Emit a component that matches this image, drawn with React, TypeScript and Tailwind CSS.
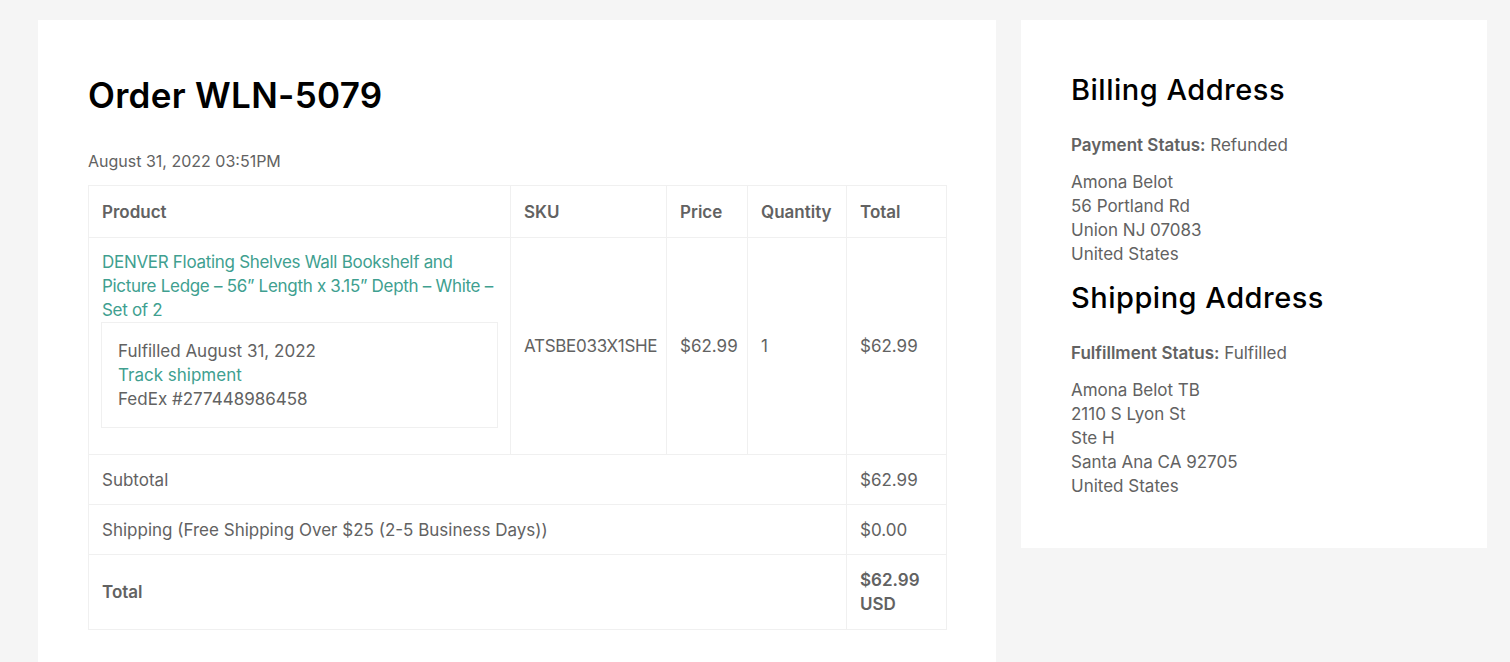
const order = {
  number: "WLN-5079",
  date: "August 31, 2022 03:51PM",
  item: {
    name: "DENVER Floating Shelves Wall Bookshelf and Picture Ledge – 56” Length x 3.15” Depth – White – Set of 2",
    sku: "ATSBE033X1SHE",
    price: "$62.99",
    qty: 1,
    total: "$62.99",
  },
};

const font = { fontFamily: "Inter, 'Noto Sans', sans-serif" };

const AddressLines = ({ lines }: { lines: string[] }) => (
  <div className="mt-[13px]">
    {lines.map((l) => (
      <p key={l}>{l}</p>
    ))}
  </div>
);

export default function App() {
  const cell = "border border-[#f0f0f0] px-[13px] align-middle";

  return (
    <main
      style={font}
      className="bg-[#f5f5f5] min-h-screen pt-5 px-[38px] flex items-start gap-[25px] text-[17px] leading-6 text-[#626262]"
    >
      <section className="bg-white w-[958px] shrink-0 px-[50px] pt-[50px] pb-[50px]">
        <h1 className="text-[35px] leading-[50px] font-semibold text-black tracking-[0.3px]">
          Order {order.number}
        </h1>
        <p className="mt-[29px] text-[16px]">{order.date}</p>
        <table className="mt-3 w-full table-fixed border-collapse">
          <colgroup>
            <col className="w-[422px]" />
            <col className="w-[156px]" />
            <col className="w-[81px]" />
            <col className="w-[99px]" />
            <col className="w-[100px]" />
          </colgroup>
          <thead>
            <tr className="h-[52px] text-left">
              <th className={cell + " font-semibold"}>Product</th>
              <th className={cell + " font-semibold"}>SKU</th>
              <th className={cell + " font-semibold"}>Price</th>
              <th className={cell + " font-semibold"}>Quantity</th>
              <th className={cell + " font-semibold"}>Total</th>
            </tr>
          </thead>
          <tbody>
            <tr>
              <td className="border border-[#f0f0f0] px-3 pt-3 pb-[26px] align-top">
                <a href="#" className="block px-[1px] tracking-[-0.3px] text-[#409f90]">
                  {order.item.name}
                </a>
                <div className="border border-[#f0f0f0] px-[16px] py-[16px]">
                  <p>Fulfilled August 31, 2022</p>
                  <a href="#" className="block text-[#409f90]">
                    Track shipment
                  </a>
                  <p>FedEx #277448986458</p>
                </div>
              </td>
              <td className={cell + " tracking-[-0.3px]"}>{order.item.sku}</td>
              <td className={cell}>{order.item.price}</td>
              <td className={cell}>{order.item.qty}</td>
              <td className={cell}>{order.item.total}</td>
            </tr>
            <tr className="h-[50px]">
              <td colSpan={4} className={cell}>
                Subtotal
              </td>
              <td className={cell}>$62.99</td>
            </tr>
            <tr className="h-[50px]">
              <td colSpan={4} className={cell}>
                Shipping (Free Shipping Over $25 (2-5 Business Days))
              </td>
              <td className={cell}>$0.00</td>
            </tr>
            <tr className="h-[75px] font-semibold">
              <td colSpan={4} className={cell}>
                Total
              </td>
              <td className={cell}>
                $62.99
                <br />
                USD
              </td>
            </tr>
          </tbody>
        </table>
      </section>

      <aside className="bg-white w-[466px] shrink-0 p-[50px]">
        <h2 className="text-[29px] leading-10 font-medium text-black tracking-[0.5px]">
          Billing Address
        </h2>
        <p className="mt-[23px]">
          <span className="font-semibold">Payment Status:</span> Refunded
        </p>
        <AddressLines lines={["Amona Belot", "56 Portland Rd", "Union NJ 07083", "United States"]} />
        <h2 className="mt-3 text-[29px] leading-10 font-medium text-black tracking-[0.5px]">
          Shipping Address
        </h2>
        <p className="mt-[23px]">
          <span className="font-semibold">Fulfillment Status:</span> Fulfilled
        </p>
        <AddressLines
          lines={["Amona Belot TB", "2110 S Lyon St", "Ste H", "Santa Ana CA 92705", "United States"]}
        />
      </aside>
    </main>
  );
}
